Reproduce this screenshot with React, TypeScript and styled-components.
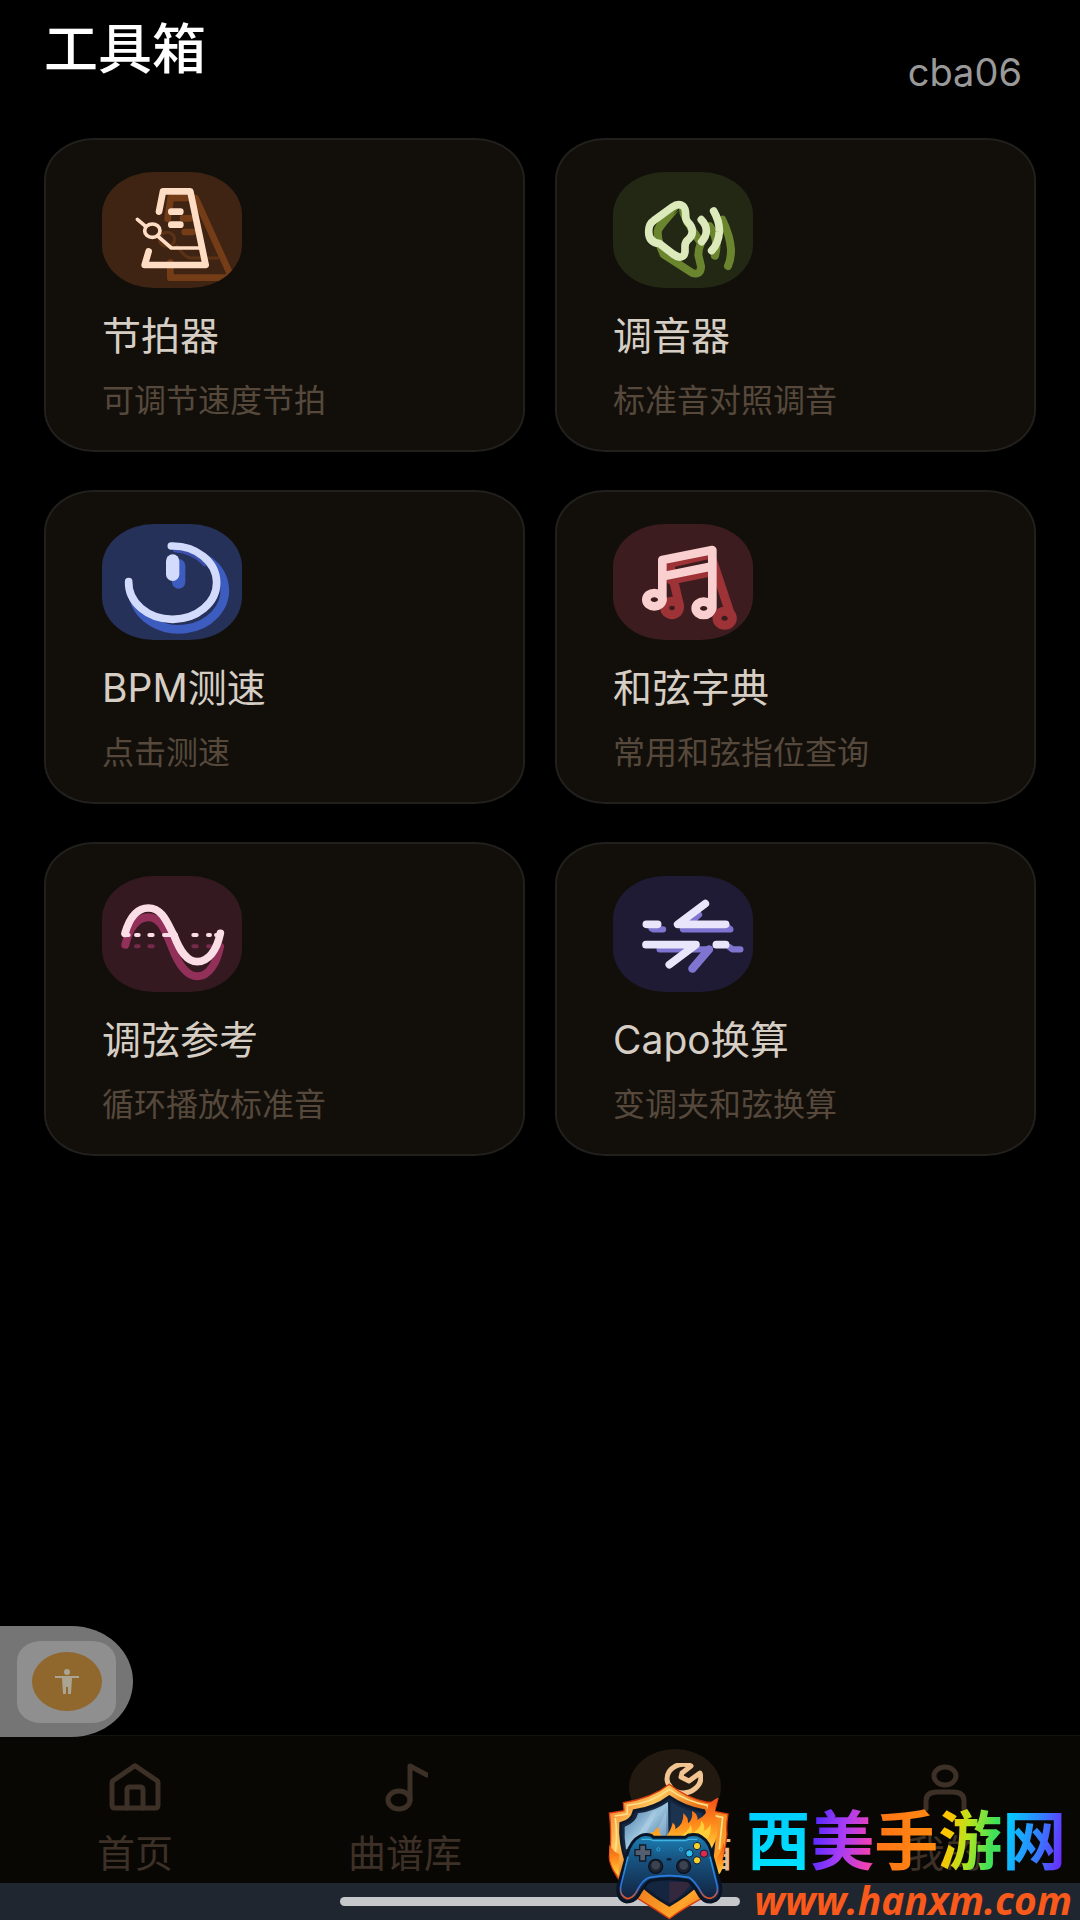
import React from "react";
import styled, { createGlobalStyle } from "styled-components";

const GlobalStyle = createGlobalStyle`
  * {
    box-sizing: border-box;
  }
  body {
    margin: 0;
    background: #000;
    font-family: Inter, "Noto Sans CJK SC", sans-serif;
  }
  a {
    color: inherit;
    text-decoration: none;
  }
`;

const Page = styled.div`
  position: relative;
  min-height: 100vh;
  display: flex;
  flex-direction: column;
  background: #000;
  overflow: hidden;
`;

const Header = styled.header`
  display: flex;
  justify-content: space-between;
  padding: 18px 58px 0 44px;
`;

const Heading = styled.h1`
  margin: 0;
  font-size: 54px;
  line-height: 64px;
  font-weight: 500;
  color: #fff;
`;

const UserName = styled.span`
  padding-top: 30px;
  font-size: 38px;
  line-height: 48px;
  color: #999;
`;

const Main = styled.main`
  flex: 1;
  padding: 42px 44px 0;
`;

const Grid = styled.div`
  display: grid;
  grid-template-columns: 1fr 1fr;
  gap: 38px 30px;
`;

const Card = styled.button`
  display: flex;
  flex-direction: column;
  align-items: flex-start;
  padding: 32px 56px 25px;
  border: 2px solid #22201d;
  border-radius: 50px / 42px;
  background: #120f0b;
  font-family: inherit;
  text-align: left;
`;

interface ITile {
  $bg: string;
}

const Tile = styled.span<ITile>`
  display: block;
  width: 140px;
  height: 116px;
  border-radius: 52px / 43px;
  background: ${props => props.$bg};
  overflow: hidden;
  svg {
    display: block;
    width: 100%;
    height: 100%;
  }
`;

const CardTitle = styled.span`
  margin-top: 18px;
  font-size: 39px;
  line-height: 60px;
  color: #d6cec4;
`;

const CardText = styled.span`
  margin-top: 11px;
  font-size: 32px;
  line-height: 48px;
  color: #56493c;
`;

const NavBar = styled.nav`
  display: grid;
  grid-template-columns: repeat(4, 1fr);
  padding: 13px 0 6px;
  border-top: 1px solid #15120e;
  background: #090704;
`;

interface INavItem {
  $active?: boolean;
}

const NavItem = styled.a<INavItem>`
  display: flex;
  flex-direction: column;
  align-items: center;
  gap: 4px;
  font-size: 38px;
  line-height: 48px;
  font-weight: ${props => (props.$active ? 500 : 400)};
  && {
    color: ${props => (props.$active ? "#e6bd92" : "#3d3127")};
  }
`;

const NavIcon = styled.span<INavItem>`
  display: flex;
  align-items: center;
  justify-content: center;
  width: 92px;
  height: 76px;
  border-radius: 50%;
  background: ${props => (props.$active ? "#221a10" : "transparent")};
`;

const SystemBar = styled.div`
  display: flex;
  justify-content: center;
  padding: 14px 0;
  background: #20262f;
`;

const HomeIndicator = styled.span`
  width: 37%;
  height: 9px;
  border-radius: 5px;
  background: #c6c7cb;
`;

const FloatingButton = styled.button`
  position: absolute;
  left: 0;
  bottom: 183px;
  width: 133px;
  height: 111px;
  padding: 0 0 0 17px;
  border: 0;
  border-radius: 0 62px 62px 0 / 0 56px 56px 0;
  background: #757575;
`;

const FloatingFace = styled.span`
  display: flex;
  align-items: center;
  justify-content: center;
  width: 99px;
  height: 82px;
  border-radius: 24px / 20px;
  background: #8f8f8f;
`;

const FloatingDot = styled.span`
  display: flex;
  align-items: center;
  justify-content: center;
  width: 70px;
  height: 59px;
  border-radius: 50%;
  background: #90672d;
`;

const SiteMark = styled.a`
  position: absolute;
  right: 8px;
  bottom: 0;
  display: flex;
  align-items: flex-end;
  gap: 16px;
`;

const SiteText = styled.span`
  display: flex;
  flex-direction: column;
`;

const SiteName = styled.span`
  display: flex;
  font-family: "Noto Sans CJK SC", sans-serif;
  font-size: 64px;
  line-height: 88px;
  font-weight: 700;
`;

interface ISiteGlyph {
  $fill: string;
}

const SiteGlyph = styled.span<ISiteGlyph>`
  background: ${props => props.$fill};
  background-clip: text;
  -webkit-background-clip: text;
  color: transparent;
`;

const SiteUrl = styled.span`
  padding-left: 8px;
  font-family: "Open Sans", sans-serif;
  font-size: 39px;
  line-height: 40px;
  font-weight: 700;
  font-style: italic;
  color: #f95a1c;
`;

interface ILayer {
  color: string;
  width: number;
  children: React.ReactNode;
}

const Layer: React.FC<ILayer> = ({ color, width, children }) => (
  <g
    fill="none"
    stroke={color}
    strokeWidth={width}
    strokeLinecap="round"
    strokeLinejoin="round"
  >
    {children}
  </g>
);

const MetronomeIcon = () => (
  <svg viewBox="-3 0 420 348">
    <Layer color="#743d18" width={20}>
      <path d="M194 140 203 78H278L382 308 372 317H202V272" />
      <path d="M240 139H262M245 180H268" />
    </Layer>
    <Layer color="#5c3216" width={9}>
      <ellipse cx="192" cy="202" rx="23" ry="21" />
      <path d="M222 222 Q245 258 266 258H345" />
    </Layer>
    <Layer color="#ffdcc4" width={20}>
      <path d="M168 119 180 58H262L308 279H125L137 238" />
      <path d="M205 119H232M205 158H232" />
    </Layer>
    <Layer color="#ffdcc4" width={11}>
      <path d="M103 142 128 163M166 194 205 228H295" />
      <ellipse cx="148" cy="176" rx="23" ry="20" />
    </Layer>
  </svg>
);

const SpeakerIcon = () => (
  <svg viewBox="-2 -3 420 348">
    <Layer color="#6b852f" width={24}>
      <path d="M150 244 Q132 205 132 176 Q134 160 150 148L200 104 Q216 130 222 150L262 210 Q254 228 254 246L262 280 Q262 308 236 300L150 244" />
      <path d="M326 140 Q350 190 352 230 Q352 260 343 279M288 160 Q318 200 304 248" />
    </Layer>
    <path
      d="M150 178 Q145 160 160 146L196 105 200 143 219 164 218 186 200 203V240L146 197Z"
      fill="#232815"
    />
    <path d="M132 158 196 112 160 154 142 178 140 200 126 190Z" fill="#6b852f" />
    <Layer color="#dce9bb" width={23}>
      <path d="M120 143 176 102 Q194 89 208 99 Q217 107 216 130 Q216 142 223 148 Q236 160 236 175 Q236 190 223 200 Q214 208 214 220V236 Q212 254 196 252 Q188 250 178 243L138 212 Q105 208 105 176 Q105 152 120 143Z" />
      <path d="M263 140 Q278 155 278 174 Q278 190 264 206M300 114 Q318 145 317 176 Q315 210 294 233" />
    </Layer>
  </svg>
);

const SpeedIcon = () => (
  <svg viewBox="-3 0 420 348">
    <Layer color="#3d5cc0" width={26}>
      <path d="M222 82A138 117 0 1 1 92 222" />
    </Layer>
    <ellipse cx="207" cy="176" rx="126" ry="102" fill="#263159" />
    <Layer color="#3d5cc0" width={40}>
      <path d="M227 125V174" />
    </Layer>
    <Layer color="#3d50ad" width={10}>
      <path d="M215 80 Q270 84 305 122" />
    </Layer>
    <Layer color="#d2dbfb" width={23}>
      <path d="M205 66A132 110 0 1 1 77 173" />
    </Layer>
    <Layer color="#d2dbfb" width={40}>
      <path d="M209 111V151" />
    </Layer>
  </svg>
);

const ChordIcon = () => (
  <svg viewBox="-2 0 420 348">
    <Layer color="#9d3337" width={27}>
      <path d="M168 118 290 90 350 270M168 120 198 246M172 168 290 144" />
      <ellipse cx="175" cy="252" rx="22" ry="20" />
      <ellipse cx="333" cy="283" rx="23" ry="21" />
    </Layer>
    <Layer color="#f9cfcf" width={26}>
      <path d="M146 228V108L296 78V253M156 155 296 127" />
      <ellipse cx="122" cy="227" rx="24" ry="20" />
      <ellipse cx="270" cy="253" rx="24" ry="20" />
    </Layer>
  </svg>
);

const WaveIcon = () => (
  <svg viewBox="-4 0 420 348">
    <Layer color="#762a4b" width={12}>
      <path d="M98 211H106M138 211H148M270 211H280M314 211H320" />
    </Layer>
    <Layer color="#93305a" width={24}>
      <path d="M66 206C80 150 105 124 135 124C178 124 190 180 205 212C225 265 250 301 282 301C316 301 340 262 350 212" />
    </Layer>
    <Layer color="#fbdde6" width={12}>
      <path d="M62 177H76M98 177H106M138 177H148M182 177H218M270 177H280M314 177H320M338 177H346" />
    </Layer>
    <Layer color="#fbdde6" width={23}>
      <path d="M65 172C80 120 105 96 135 96C180 96 195 150 212 178C230 225 250 257 282 257C314 257 340 225 351 172" />
    </Layer>
  </svg>
);

const CapoIcon = () => (
  <svg viewBox="-2 0 420 348">
    <Layer color="#7f75d0" width={19}>
      <path d="M114 157 120 160H148M256 116 208 160H350L340 152M138 220H288M348 214 356 220H380" />
    </Layer>
    <Layer color="#7f75d0" width={25}>
      <path d="M286 220 236 278" />
    </Layer>
    <Layer color="#e9e6fb" width={23}>
      <path d="M98 145H132M275 83 192 145H336M97 206H247L167 266M308 206H336" />
    </Layer>
  </svg>
);

const HomeIcon = () => (
  <svg width="52" height="48" viewBox="0 0 52 48">
    <Layer color="currentColor" width={5}>
      <path d="M3 20 Q3 18 5 17L24 4 Q26 2 28 4L47 17 Q49 18 49 20V42 Q49 45 46 45H6 Q3 45 3 42Z" />
      <path d="M18 45V27 Q18 24 21 24H31 Q34 24 34 27V45" />
    </Layer>
  </svg>
);

const NoteIcon = () => (
  <svg width="46" height="50" viewBox="-3 0 46 50">
    <Layer color="currentColor" width={5}>
      <ellipse cx="14" cy="38" rx="11" ry="9" />
      <path d="M25 38V4L42 13" />
    </Layer>
  </svg>
);

const WrenchIcon = () => (
  <svg width="56" height="48" viewBox="-5 2 56 48">
    <Layer color="#f2c491" width={5}>
      <path d="M39 5C28 0 15 7 15 18C15 21 16 23 18 25L6 37C2 42 9 48 14 44L25 31C39 35 52 24 48 12L37 20L29 16L30 12Z" />
    </Layer>
  </svg>
);

const ProfileIcon = () => (
  <svg width="52" height="48" viewBox="0 0 52 48">
    <Layer color="currentColor" width={5}>
      <ellipse cx="26" cy="13" rx="11" ry="9" />
      <path d="M7 46V38 Q7 29 18 29H34 Q45 29 45 38V46" />
    </Layer>
  </svg>
);

const PersonIcon = () => (
  <svg width="26" height="28" viewBox="0 0 26 28" fill="#aaa592">
    <circle cx="13" cy="4" r="3" />
    <path d="M1 8H25V10H18L17 26H14V19H12V26H9L8 10H1Z" />
  </svg>
);

const ShieldLogo = () => (
  <svg width="122" height="137" viewBox="50 63 366 411">
    <defs>
      <linearGradient id="rim" x1="0" y1="0" x2="1" y2="1">
        <stop offset="0" stopColor="#f0621a" />
        <stop offset="0.25" stopColor="#ffc65a" />
        <stop offset="0.45" stopColor="#e8741a" />
        <stop offset="0.75" stopColor="#ffa52a" />
        <stop offset="1" stopColor="#e0501a" />
      </linearGradient>
      <linearGradient id="steel" x1="0" y1="0" x2="1" y2="1">
        <stop offset="0" stopColor="#3c6d98" />
        <stop offset="0.5" stopColor="#9cc4de" />
        <stop offset="1" stopColor="#2f5f8c" />
      </linearGradient>
      <linearGradient id="fire" x1="0" y1="0" x2="0" y2="1">
        <stop offset="0" stopColor="#f0501a" />
        <stop offset="0.5" stopColor="#ff8a1a" />
        <stop offset="1" stopColor="#ffd23c" />
      </linearGradient>
      <linearGradient id="pad" x1="0" y1="0" x2="0" y2="1">
        <stop offset="0" stopColor="#1c7fb4" />
        <stop offset="0.4" stopColor="#17507d" />
        <stop offset="1" stopColor="#101f3a" />
      </linearGradient>
      <linearGradient id="grip" x1="0" y1="0" x2="0" y2="1">
        <stop offset="0" stopColor="#2a9be0" />
        <stop offset="0.7" stopColor="#2a6fe0" />
        <stop offset="1" stopColor="#f0521c" />
      </linearGradient>
    </defs>
    <path
      d="M234 67 Q285 108 344 120 Q372 124 380 108 Q374 134 369 148L410 156 Q404 190 407 216 Q402 270 384 320 Q374 380 330 410 Q275 440 234 470 Q190 440 140 410 Q88 370 66 325 Q48 290 57 270 Q60 200 54 153L98 146 96 122 Q180 110 234 67Z"
      fill="url(#rim)"
      stroke="#d83b10"
      strokeWidth="4"
    />
    <path
      d="M234 82 Q285 118 348 130L356 158 394 166 Q388 220 384 262M70 162 108 156 108 130 Q180 124 234 82M72 168 Q80 230 70 282"
      fill="none"
      stroke="#ffe08a"
      strokeWidth="5"
    />
    <path
      d="M234 104 Q280 136 338 146 Q342 172 370 182 Q370 250 360 300 Q340 370 234 430 Q128 370 104 300 Q84 240 88 184 Q122 176 128 146 Q190 138 234 104Z"
      fill="#14253f"
      stroke="#0e1a2c"
      strokeWidth="8"
    />
    <path
      d="M230 120 Q190 148 140 154 Q134 182 100 194 Q98 230 104 262L232 262Z"
      fill="url(#steel)"
    />
    <path d="M238 120 Q280 146 328 154 Q334 182 360 192L350 260H238Z" fill="#1c3350" />
    <path d="M128 240 182 150 200 142 150 244ZM186 230 224 148V236Z" fill="#c3deee" opacity="0.35" />
    <path d="M234 360 300 360 Q280 400 234 424Z" fill="#33283d" />
    <path
      d="M172 226 Q176 208 188 210 Q190 200 204 196 Q200 210 212 224ZM222 226 Q240 204 244 182 Q254 188 252 202 Q278 188 276 154 Q292 166 290 184 Q306 172 302 146 Q322 158 318 174 Q348 160 350 132 Q364 112 380 108 Q366 140 374 168 Q384 204 372 236L360 262 340 226Z"
      fill="url(#fire)"
    />
    <path
      d="M262 224 Q290 212 298 188 Q304 204 300 216 Q330 200 330 176 Q344 190 336 208 Q352 200 358 186 Q360 220 346 232Z"
      fill="#ffcf3a"
    />
    <path
      d="M376 290 Q394 262 396 240 Q402 262 392 296L398 296 Q396 326 380 340ZM54 248 Q66 270 84 276L82 340 Q50 312 54 248Z"
      fill="url(#fire)"
    />
    <path
      d="M146 222 Q160 214 180 220L186 226H282L290 220 Q316 214 330 224 Q356 240 362 280L388 372 Q392 414 360 420 Q338 422 324 400 Q304 364 290 356 Q234 344 176 356 Q160 366 140 402 Q128 420 106 420 Q76 414 80 374L106 280 Q118 236 146 222Z"
      fill="url(#pad)"
      stroke="#091425"
      strokeWidth="9"
    />
    <path
      d="M110 284 88 374 Q84 402 108 410 Q124 408 134 392 Q154 350 176 346 Q234 336 292 346 Q310 356 330 392 Q342 412 360 408 Q382 400 378 374L356 284"
      fill="none"
      stroke="url(#grip)"
      strokeWidth="5"
    />
    <path d="M150 232H176L186 236H282L292 232H318" fill="none" stroke="#41b4e2" strokeWidth="4" />
    <path
      d="M145 249H163V263H178V281H163V297H145V281H131V263H145Z"
      fill="#535f70"
      stroke="#101a2b"
      strokeWidth="4"
    />
    <circle cx="193" cy="313" r="21" fill="#1c222e" stroke="#0b111c" strokeWidth="4" />
    <circle cx="193" cy="310" r="13" fill="#3b4351" />
    <circle cx="277" cy="313" r="21" fill="#1c222e" stroke="#0b111c" strokeWidth="4" />
    <circle cx="277" cy="310" r="13" fill="#3b4351" />
    <circle cx="201" cy="262" r="5" fill="none" stroke="#27a7d6" strokeWidth="3" />
    <circle cx="269" cy="262" r="5" fill="none" stroke="#27a7d6" strokeWidth="3" />
    <ellipse cx="233" cy="292" rx="8" ry="4" fill="#0d2038" />
    <circle cx="317" cy="252" r="11" fill="#f7cf2e" stroke="#11203a" strokeWidth="3" />
    <circle cx="317" cy="295" r="11" fill="#f7cf2e" stroke="#11203a" strokeWidth="3" />
    <circle cx="294" cy="274" r="11" fill="#2cc4ee" stroke="#11203a" strokeWidth="3" />
    <circle cx="338" cy="275" r="11" fill="#e2294b" stroke="#11203a" strokeWidth="3" />
  </svg>
);

const tools = [
  { title: "节拍器", text: "可调节速度节拍", bg: "#3f2413", icon: <MetronomeIcon /> },
  { title: "调音器", text: "标准音对照调音", bg: "#232815", icon: <SpeakerIcon /> },
  { title: "BPM测速", text: "点击测速", bg: "#263159", icon: <SpeedIcon /> },
  { title: "和弦字典", text: "常用和弦指位查询", bg: "#3c1c1e", icon: <ChordIcon /> },
  { title: "调弦参考", text: "循环播放标准音", bg: "#341a20", icon: <WaveIcon /> },
  { title: "Capo换算", text: "变调夹和弦换算", bg: "#1f1b34", icon: <CapoIcon /> }
];

const tabs = [
  { label: "首页", icon: <HomeIcon /> },
  { label: "曲谱库", icon: <NoteIcon /> },
  { label: "工具箱", icon: <WrenchIcon />, active: true },
  { label: "我的", icon: <ProfileIcon /> }
];

const siteName = [
  { glyph: "西", fill: "linear-gradient(180deg, #00c8ff, #00e4ff)" },
  { glyph: "美", fill: "linear-gradient(100deg, #5b2cff 15%, #a63cf5 50%, #f542b0 90%)" },
  { glyph: "手", fill: "linear-gradient(90deg, #ff7417, #ff8a10)" },
  { glyph: "游", fill: "linear-gradient(100deg, #ffc400 20%, #b4e61e 48%, #3fe05a 80%)" },
  { glyph: "网", fill: "linear-gradient(100deg, #00d0ff 10%, #2a8cff 50%, #6a2cff 90%)" }
];

const App: React.FC = () => (
  <Page>
    <GlobalStyle />
    <Header>
      <Heading>工具箱</Heading>
      <UserName>cba06</UserName>
    </Header>
    <Main>
      <Grid>
        {tools.map(tool => (
          <Card key={tool.title} type="button">
            <Tile $bg={tool.bg}>{tool.icon}</Tile>
            <CardTitle>{tool.title}</CardTitle>
            <CardText>{tool.text}</CardText>
          </Card>
        ))}
      </Grid>
    </Main>
    <NavBar>
      {tabs.map(tab => (
        <NavItem key={tab.label} href="#" $active={tab.active}>
          <NavIcon $active={tab.active}>{tab.icon}</NavIcon>
          {tab.label}
        </NavItem>
      ))}
    </NavBar>
    <SystemBar>
      <HomeIndicator />
    </SystemBar>
    <FloatingButton type="button" aria-label="无障碍">
      <FloatingFace>
        <FloatingDot>
          <PersonIcon />
        </FloatingDot>
      </FloatingFace>
    </FloatingButton>
    <SiteMark href="#">
      <ShieldLogo />
      <SiteText>
        <SiteName>
          {siteName.map(item => (
            <SiteGlyph key={item.glyph} $fill={item.fill}>
              {item.glyph}
            </SiteGlyph>
          ))}
        </SiteName>
        <SiteUrl>www.hanxm.com</SiteUrl>
      </SiteText>
    </SiteMark>
  </Page>
);

export default App;
